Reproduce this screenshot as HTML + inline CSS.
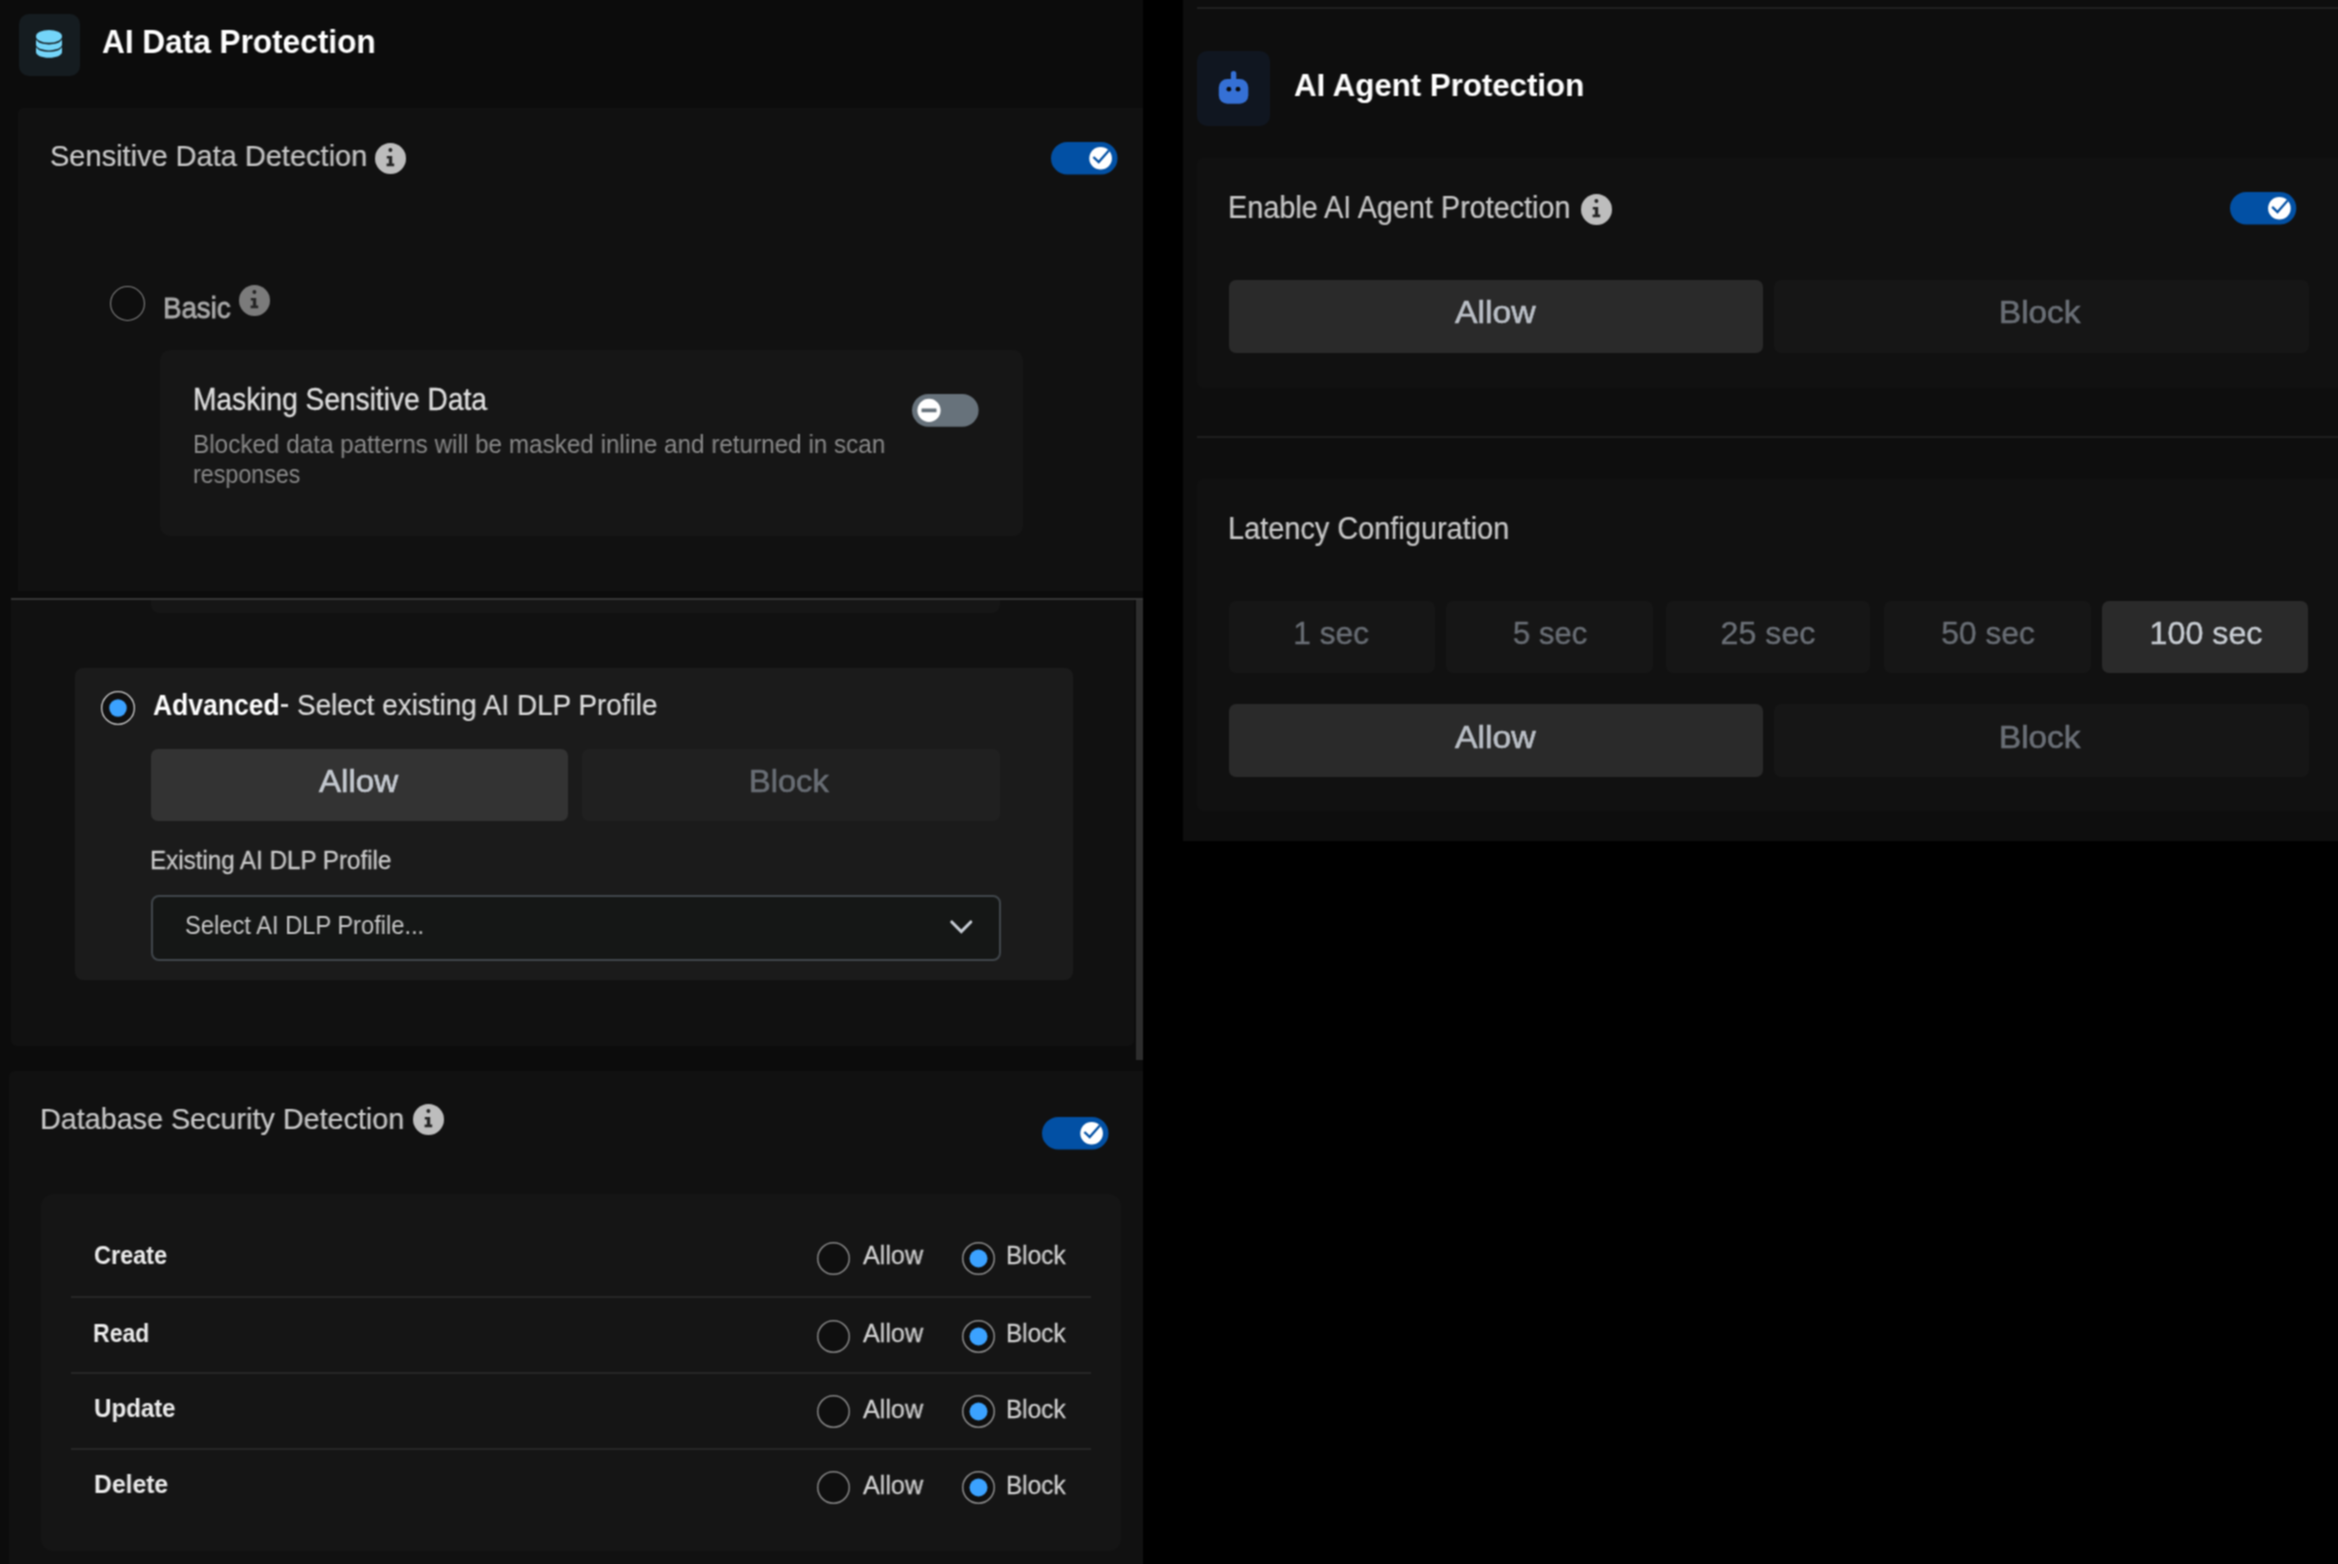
<!DOCTYPE html>
<html><head><meta charset="utf-8"><title>AI Protection</title>
<style>
html,body{margin:0;padding:0;background:#000;}
body{width:2338px;height:1564px;position:relative;overflow:hidden;font-family:"Liberation Sans",sans-serif;filter:url(#bl);}
body>div,body>svg{position:absolute;display:block;overflow:visible;}
.t{white-space:nowrap;will-change:transform;}
</style></head><body>
<svg width="0" height="0"><filter id="bl" x="0" y="0" width="100%" height="100%" color-interpolation-filters="sRGB"><feConvolveMatrix order="3" kernelMatrix="1 2 1 2 4 2 1 2 1" divisor="16" edgeMode="duplicate" preserveAlpha="true"/></filter></svg>
<div style="left:0px;top:0px;width:1143px;height:1564px;background:#0c0c0c;border-radius:0px;"></div>
<div style="left:18.5px;top:14px;width:61.5px;height:61.5px;background:#151c20;border-radius:10px;"></div>
<svg style="left:36.4px;top:30.2px" width="26" height="27.8" viewBox="0 0 26 27.8"><g fill="#74d5f9"><ellipse cx="13" cy="6.4" rx="13" ry="6.4"/><path d="M0 9.6 C2.2 13.4 7.6 14.4 13 14.4 C18.4 14.4 23.8 13.4 26 9.6 V14.6 C26 18 20.2 20.4 13 20.4 C5.8 20.4 0 18 0 14.6 Z"/><path d="M0 17 C2.2 20.8 7.6 21.8 13 21.8 C18.4 21.8 23.8 20.8 26 17 V22 C26 25.4 20.2 27.8 13 27.8 C5.8 27.8 0 25.4 0 22 Z"/></g></svg>
<div class="t" id="t0" style="left:102.23px;top:25px;font-size:33.14px;line-height:33.14px;color:#ffffff;font-weight:700;transform:scaleX(0.9528);transform-origin:left center;">AI Data Protection</div>
<div style="left:18.2px;top:107.5px;width:1124.8px;height:483.5px;background:#111111;border-radius:5px 0 0 0;"></div>
<div class="t" id="t1" style="left:49.67px;top:142px;font-size:29.04px;line-height:29.04px;color:#c9c9c9;font-weight:400;-webkit-text-stroke:0.22px #c9c9c9;transform:scaleX(0.9981);transform-origin:left center;">Sensitive Data Detection</div>
<svg style="left:374.6px;top:142.8px" width="31" height="31" viewBox="0 0 31 31"><circle cx="15.5" cy="15.5" r="15.5" fill="#bdbdbd"/><circle cx="15.4" cy="7.1" r="2.0" fill="#262626"/><path d="M11.8 13.1 H17.2 V20.6 H19.2 V23.2 H11.6 V20.6 H13.9 V15.5 H11.8 Z" fill="#262626"/></svg>
<svg style="left:1051.4px;top:141.9px" width="66.5" height="32.6" viewBox="0 0 66.5 32.6"><rect x="0" y="0" width="66.5" height="32.6" rx="16.3" fill="#0250a4"/><circle cx="49.599999999999994" cy="16.3" r="11.3" fill="#fff"/><path d="M42.39999999999999 15.0 L47.699999999999996 20.1 L57.89999999999999 8.5" fill="none" stroke="#0250a4" stroke-width="2.3" stroke-linecap="butt" stroke-linejoin="miter"/></svg>
<svg style="left:109.5px;top:286.25px" width="35" height="35" viewBox="0 0 35 35"><circle cx="17.5" cy="17.5" r="16.95" fill="#0e0e0e" stroke="#808080" stroke-width="1.1"/></svg>
<div class="t" id="t2" style="left:162.66px;top:293px;font-size:29.94px;line-height:29.94px;color:#a9a9a9;font-weight:400;-webkit-text-stroke:0.8px #a9a9a9;transform:scaleX(0.9240);transform-origin:left center;">Basic</div>
<svg style="left:239.3px;top:285.2px" width="31" height="31" viewBox="0 0 31 31"><circle cx="15.5" cy="15.5" r="15.5" fill="#7b7b7b"/><circle cx="15.4" cy="7.1" r="2.0" fill="#262626"/><path d="M11.8 13.1 H17.2 V20.6 H19.2 V23.2 H11.6 V20.6 H13.9 V15.5 H11.8 Z" fill="#262626"/></svg>
<div style="left:160px;top:350px;width:863px;height:186px;background:#161616;border-radius:10px;"></div>
<div class="t" id="t3" style="left:192.9px;top:384px;font-size:31.32px;line-height:31.32px;color:#dedede;font-weight:400;-webkit-text-stroke:0.35px #dedede;transform:scaleX(0.8982);transform-origin:left center;">Masking Sensitive Data</div>
<div class="t" id="t4" style="left:193.25px;top:432px;font-size:25.0px;line-height:25.0px;color:#8b8b8b;font-weight:400;transform:scaleX(0.9711);transform-origin:left center;">Blocked data patterns will be masked inline and returned in scan</div>
<div class="t" id="t5" style="left:193.47px;top:462px;font-size:25.0px;line-height:25.0px;color:#8b8b8b;font-weight:400;transform:scaleX(0.9308);transform-origin:left center;">responses</div>
<svg style="left:911.5px;top:393.9px" width="66.6" height="32.7" viewBox="0 0 66.6 32.7"><rect x="0" y="0" width="66.6" height="32.7" rx="16.35" fill="#67727b"/><circle cx="17.0" cy="16.35" r="11.6" fill="#fff"/><rect x="9.5" y="14.55" width="15" height="3.6" rx="0.5" fill="#67727b"/></svg>
<div style="left:11px;top:597.6px;width:1132px;height:2.6px;background:#353535;border-radius:0px;"></div>
<div style="left:11px;top:600.2px;width:1123px;height:446.2px;background:#111111;border-radius:0 0 6px 6px;"></div>
<div style="left:151px;top:600.2px;width:849px;height:12.8px;background:#161616;border-radius:0 0 8px 8px;"></div>
<div style="left:1136.4px;top:600.2px;width:6.6px;height:459.8px;background:#2d2d2d;border-radius:0px;"></div>
<div style="left:74.5px;top:667.5px;width:998.25px;height:312.7px;background:#1b1b1b;border-radius:8px;"></div>
<svg style="left:101.0px;top:691.0px" width="34" height="34" viewBox="0 0 34 34"><circle cx="17.0" cy="17.0" r="16.35" fill="#101010" stroke="#d0d0d0" stroke-width="1.3"/><circle cx="17.0" cy="17.0" r="8.75" fill="#3ba2ff"/></svg>
<div class="t" id="t6" style="left:152.85px;top:690px;font-size:30.16px;line-height:30.16px;color:#ffffff;font-weight:700;transform:scaleX(0.8780);transform-origin:left center;">Advanced</div>
<div style="left:281.3px;top:704.2px;width:6.7px;height:2.4px;background:#dcdcdc;border-radius:0px;"></div>
<div class="t" id="t7" style="left:297.08px;top:690px;font-size:29.84px;line-height:29.84px;color:#dcdcdc;font-weight:400;-webkit-text-stroke:0.22px #dcdcdc;transform:scaleX(0.9342);transform-origin:left center;">Select existing AI DLP Profile</div>
<div style="left:151px;top:749px;width:417px;height:71.5px;background:#333333;border-radius:7px;"></div>
<div style="left:581.5px;top:749px;width:418.5px;height:71.5px;background:#202020;border-radius:7px;"></div>
<div class="t" id="t8" style="left:319.28px;top:766px;font-size:31.61px;line-height:31.61px;color:#c3c8cf;font-weight:400;-webkit-text-stroke:0.65px #c3c8cf;transform:scaleX(1.0466);transform-origin:left center;">Allow</div>
<div class="t" id="t9" style="left:749.2px;top:766px;font-size:31.61px;line-height:31.61px;color:#686d74;font-weight:400;-webkit-text-stroke:0.65px #686d74;transform:scaleX(1.0312);transform-origin:left center;">Block</div>
<div class="t" id="t10" style="left:150.19px;top:848px;font-size:25.0px;line-height:25.0px;color:#c9c9c9;font-weight:400;-webkit-text-stroke:0.3px #c9c9c9;transform:scaleX(0.9665);transform-origin:left center;">Existing AI DLP Profile</div>
<div style="left:150.6px;top:895.3px;width:850.2px;height:66.0px;background:#151716;border-radius:8px;box-sizing:border-box;border:2px solid #40464b;"></div>
<div class="t" id="t11" style="left:184.77px;top:913px;font-size:25.07px;line-height:25.07px;color:#c9c9c9;font-weight:400;transform:scaleX(0.9450);transform-origin:left center;">Select AI DLP Profile...</div>
<svg style="left:948px;top:917px" width="26" height="19" viewBox="0 0 26 19"><path d="M3.8 5 L13.3 14.6 L22.8 5" fill="none" stroke="#c6ccd4" stroke-width="3.1" stroke-linecap="round" stroke-linejoin="miter"/></svg>
<div style="left:9px;top:1071px;width:1134px;height:493px;background:#111111;border-radius:6px 0 0 0;"></div>
<div class="t" id="t12" style="left:40.44px;top:1105px;font-size:29.11px;line-height:29.11px;color:#c9c9c9;font-weight:400;-webkit-text-stroke:0.22px #c9c9c9;transform:scaleX(0.9873);transform-origin:left center;">Database Security Detection</div>
<svg style="left:413.25px;top:1104.0px" width="31" height="31" viewBox="0 0 31 31"><circle cx="15.5" cy="15.5" r="15.5" fill="#bdbdbd"/><circle cx="15.4" cy="7.1" r="2.0" fill="#262626"/><path d="M11.8 13.1 H17.2 V20.6 H19.2 V23.2 H11.6 V20.6 H13.9 V15.5 H11.8 Z" fill="#262626"/></svg>
<svg style="left:1042px;top:1117px" width="66.5" height="32.6" viewBox="0 0 66.5 32.6"><rect x="0" y="0" width="66.5" height="32.6" rx="16.3" fill="#0250a4"/><circle cx="49.599999999999994" cy="16.3" r="11.3" fill="#fff"/><path d="M42.39999999999999 15.0 L47.699999999999996 20.1 L57.89999999999999 8.5" fill="none" stroke="#0250a4" stroke-width="2.3" stroke-linecap="butt" stroke-linejoin="miter"/></svg>
<div style="left:41.3px;top:1193.7px;width:1079.3px;height:357.5px;background:#151515;border-radius:12px;"></div>
<div class="t" id="t13" style="left:93.63px;top:1243px;font-size:25.8px;line-height:25.8px;color:#ececec;font-weight:700;transform:scaleX(0.9097);transform-origin:left center;">Create</div>
<svg style="left:817.1px;top:1241.85px" width="33" height="33" viewBox="0 0 33 33"><circle cx="16.5" cy="16.5" r="15.75" fill="#0f0f0f" stroke="#858585" stroke-width="1.5"/></svg>
<div class="t" id="t14" style="left:863.17px;top:1243px;font-size:25.29px;line-height:25.29px;color:#cfcfcf;font-weight:400;-webkit-text-stroke:0.3px #cfcfcf;transform:scaleX(0.9934);transform-origin:left center;">Allow</div>
<svg style="left:961.5px;top:1241.85px" width="33" height="33" viewBox="0 0 33 33"><circle cx="16.5" cy="16.5" r="15.75" fill="#0f0f0f" stroke="#8c8c8c" stroke-width="1.5"/><circle cx="16.5" cy="16.5" r="9.0" fill="#3ba2ff"/></svg>
<div class="t" id="t15" style="left:1006.31px;top:1243px;font-size:25.29px;line-height:25.29px;color:#cfcfcf;font-weight:400;-webkit-text-stroke:0.3px #cfcfcf;transform:scaleX(0.9632);transform-origin:left center;">Block</div>
<div class="t" id="t16" style="left:93.05px;top:1321px;font-size:25.8px;line-height:25.8px;color:#ececec;font-weight:700;transform:scaleX(0.8928);transform-origin:left center;">Read</div>
<svg style="left:817.1px;top:1319.8px" width="33" height="33" viewBox="0 0 33 33"><circle cx="16.5" cy="16.5" r="15.75" fill="#0f0f0f" stroke="#858585" stroke-width="1.5"/></svg>
<div class="t" id="t17" style="left:863.17px;top:1321px;font-size:25.29px;line-height:25.29px;color:#cfcfcf;font-weight:400;-webkit-text-stroke:0.3px #cfcfcf;transform:scaleX(0.9934);transform-origin:left center;">Allow</div>
<svg style="left:961.5px;top:1319.8px" width="33" height="33" viewBox="0 0 33 33"><circle cx="16.5" cy="16.5" r="15.75" fill="#0f0f0f" stroke="#8c8c8c" stroke-width="1.5"/><circle cx="16.5" cy="16.5" r="9.0" fill="#3ba2ff"/></svg>
<div class="t" id="t18" style="left:1006.31px;top:1321px;font-size:25.29px;line-height:25.29px;color:#cfcfcf;font-weight:400;-webkit-text-stroke:0.3px #cfcfcf;transform:scaleX(0.9632);transform-origin:left center;">Block</div>
<div class="t" id="t19" style="left:93.58px;top:1396px;font-size:25.8px;line-height:25.8px;color:#ececec;font-weight:700;transform:scaleX(0.9324);transform-origin:left center;">Update</div>
<svg style="left:817.1px;top:1395.4px" width="33" height="33" viewBox="0 0 33 33"><circle cx="16.5" cy="16.5" r="15.75" fill="#0f0f0f" stroke="#858585" stroke-width="1.5"/></svg>
<div class="t" id="t20" style="left:863.17px;top:1397px;font-size:25.29px;line-height:25.29px;color:#cfcfcf;font-weight:400;-webkit-text-stroke:0.3px #cfcfcf;transform:scaleX(0.9934);transform-origin:left center;">Allow</div>
<svg style="left:961.5px;top:1395.4px" width="33" height="33" viewBox="0 0 33 33"><circle cx="16.5" cy="16.5" r="15.75" fill="#0f0f0f" stroke="#8c8c8c" stroke-width="1.5"/><circle cx="16.5" cy="16.5" r="9.0" fill="#3ba2ff"/></svg>
<div class="t" id="t21" style="left:1006.31px;top:1397px;font-size:25.29px;line-height:25.29px;color:#cfcfcf;font-weight:400;-webkit-text-stroke:0.3px #cfcfcf;transform:scaleX(0.9632);transform-origin:left center;">Block</div>
<div class="t" id="t22" style="left:93.74px;top:1472px;font-size:25.8px;line-height:25.8px;color:#ececec;font-weight:700;transform:scaleX(0.9573);transform-origin:left center;">Delete</div>
<svg style="left:817.1px;top:1471.4px" width="33" height="33" viewBox="0 0 33 33"><circle cx="16.5" cy="16.5" r="15.75" fill="#0f0f0f" stroke="#858585" stroke-width="1.5"/></svg>
<div class="t" id="t23" style="left:863.17px;top:1473px;font-size:25.29px;line-height:25.29px;color:#cfcfcf;font-weight:400;-webkit-text-stroke:0.3px #cfcfcf;transform:scaleX(0.9934);transform-origin:left center;">Allow</div>
<svg style="left:961.5px;top:1471.4px" width="33" height="33" viewBox="0 0 33 33"><circle cx="16.5" cy="16.5" r="15.75" fill="#0f0f0f" stroke="#8c8c8c" stroke-width="1.5"/><circle cx="16.5" cy="16.5" r="9.0" fill="#3ba2ff"/></svg>
<div class="t" id="t24" style="left:1006.31px;top:1473px;font-size:25.29px;line-height:25.29px;color:#cfcfcf;font-weight:400;-webkit-text-stroke:0.3px #cfcfcf;transform:scaleX(0.9632);transform-origin:left center;">Block</div>
<div style="left:71.4px;top:1296px;width:1019.2px;height:2px;background:#262626;border-radius:0px;"></div>
<div style="left:71.4px;top:1372px;width:1019.2px;height:2px;background:#262626;border-radius:0px;"></div>
<div style="left:71.4px;top:1448px;width:1019.2px;height:2px;background:#262626;border-radius:0px;"></div>
<div style="left:1183px;top:0px;width:1155px;height:840.5px;background:#0e0e0e;border-radius:0px;"></div>
<div style="left:1197px;top:7.2px;width:1141px;height:1.6px;background:#202020;border-radius:0px;"></div>
<div style="left:1197.3px;top:50.6px;width:72.8px;height:75.6px;background:#101620;border-radius:10px;"></div>
<svg style="left:1216px;top:68px" width="36" height="38" viewBox="0 0 36 38"><g fill="#3570d5"><rect x="2.8" y="10.9" width="29.5" height="24.9" rx="8.5"/><rect x="14.9" y="3" width="5.4" height="10" rx="2.7"/></g><circle cx="12.9" cy="21.2" r="2.4" fill="#0a0c10"/><circle cx="22" cy="21.2" r="2.4" fill="#0a0c10"/></svg>
<div class="t" id="t25" style="left:1294.28px;top:69px;font-size:32.12px;line-height:32.12px;color:#ffffff;font-weight:700;transform:scaleX(0.9720);transform-origin:left center;">AI Agent Protection</div>
<div style="left:1196.6px;top:158px;width:1141.4px;height:229.5px;background:#111111;border-radius:6px 0 0 6px;"></div>
<div class="t" id="t26" style="left:1228.42px;top:192px;font-size:30.57px;line-height:30.57px;color:#c9c9c9;font-weight:400;-webkit-text-stroke:0.22px #c9c9c9;transform:scaleX(0.9420);transform-origin:left center;">Enable AI Agent Protection</div>
<svg style="left:1580.75px;top:194.0px" width="31" height="31" viewBox="0 0 31 31"><circle cx="15.5" cy="15.5" r="15.5" fill="#bdbdbd"/><circle cx="15.4" cy="7.1" r="2.0" fill="#262626"/><path d="M11.8 13.1 H17.2 V20.6 H19.2 V23.2 H11.6 V20.6 H13.9 V15.5 H11.8 Z" fill="#262626"/></svg>
<svg style="left:2230.25px;top:192.3px" width="66.3" height="32.4" viewBox="0 0 66.3 32.4"><rect x="0" y="0" width="66.3" height="32.4" rx="16.2" fill="#0250a4"/><circle cx="49.39999999999999" cy="16.2" r="11.3" fill="#fff"/><path d="M42.19999999999999 14.899999999999999 L47.49999999999999 20.0 L57.69999999999999 8.399999999999999" fill="none" stroke="#0250a4" stroke-width="2.3" stroke-linecap="butt" stroke-linejoin="miter"/></svg>
<div style="left:1228.75px;top:279.5px;width:534.0px;height:73.0px;background:#2a2a2a;border-radius:7px;"></div>
<div style="left:1774px;top:279.5px;width:535px;height:73.0px;background:#161616;border-radius:7px;"></div>
<div class="t" id="t27" style="left:1454.77px;top:297px;font-size:31.03px;line-height:31.03px;color:#b9bec5;font-weight:400;-webkit-text-stroke:0.65px #b9bec5;transform:scaleX(1.0884);transform-origin:left center;">Allow</div>
<div class="t" id="t28" style="left:1999.1px;top:297px;font-size:31.03px;line-height:31.03px;color:#696e75;font-weight:400;-webkit-text-stroke:0.65px #696e75;transform:scaleX(1.0722);transform-origin:left center;">Block</div>
<div style="left:1196.6px;top:436px;width:1141.4px;height:1.6px;background:#1e1e1e;border-radius:0px;"></div>
<div style="left:1196.6px;top:478.5px;width:1141.4px;height:332.5px;background:#111111;border-radius:6px 0 0 6px;"></div>
<div class="t" id="t29" style="left:1228.39px;top:513px;font-size:30.57px;line-height:30.57px;color:#c9c9c9;font-weight:400;-webkit-text-stroke:0.22px #c9c9c9;transform:scaleX(0.9461);transform-origin:left center;">Latency Configuration</div>
<div style="left:1228.75px;top:600.5px;width:205.75px;height:72.75px;background:#161616;border-radius:7px;"></div>
<div class="t" id="t30" style="left:0px;top:617px;font-size:31.98px;line-height:31.98px;color:#696e75;font-weight:400;-webkit-text-stroke:0.4px #696e75;left:1331.29px;transform:translateX(-50%) scaleX(0.9900);transform-origin:center;">1 sec</div>
<div style="left:1446.25px;top:600.5px;width:206.25px;height:72.75px;background:#161616;border-radius:7px;"></div>
<div class="t" id="t31" style="left:0px;top:617px;font-size:31.98px;line-height:31.98px;color:#696e75;font-weight:400;-webkit-text-stroke:0.4px #696e75;left:1549.64px;transform:translateX(-50%) scaleX(0.9713);transform-origin:center;">5 sec</div>
<div style="left:1665.75px;top:600.5px;width:204.5px;height:72.75px;background:#161616;border-radius:7px;"></div>
<div class="t" id="t32" style="left:0px;top:617px;font-size:31.98px;line-height:31.98px;color:#696e75;font-weight:400;-webkit-text-stroke:0.4px #696e75;left:1768.11px;transform:translateX(-50%) scaleX(1.0069);transform-origin:center;">25 sec</div>
<div style="left:1884px;top:600.5px;width:206.75px;height:72.75px;background:#161616;border-radius:7px;"></div>
<div class="t" id="t33" style="left:0px;top:617px;font-size:31.98px;line-height:31.98px;color:#696e75;font-weight:400;-webkit-text-stroke:0.4px #696e75;left:1987.62px;transform:translateX(-50%) scaleX(0.9923);transform-origin:center;">50 sec</div>
<div style="left:2102px;top:600.5px;width:206.25px;height:72.75px;background:#2a2a2a;border-radius:7px;"></div>
<div class="t" id="t34" style="left:0px;top:617px;font-size:31.98px;line-height:31.98px;color:#c6cbd1;font-weight:400;-webkit-text-stroke:0.4px #c6cbd1;left:2205.51px;transform:translateX(-50%) scaleX(1.0083);transform-origin:center;">100 sec</div>
<div style="left:1228.75px;top:703.6px;width:534.0px;height:73.4px;background:#2a2a2a;border-radius:7px;"></div>
<div style="left:1774px;top:703.6px;width:535px;height:73.4px;background:#161616;border-radius:7px;"></div>
<div class="t" id="t35" style="left:1454.77px;top:722px;font-size:31.03px;line-height:31.03px;color:#b9bec5;font-weight:400;-webkit-text-stroke:0.65px #b9bec5;transform:scaleX(1.0884);transform-origin:left center;">Allow</div>
<div class="t" id="t36" style="left:1999.1px;top:722px;font-size:31.03px;line-height:31.03px;color:#696e75;font-weight:400;-webkit-text-stroke:0.65px #696e75;transform:scaleX(1.0722);transform-origin:left center;">Block</div>
</body></html>
